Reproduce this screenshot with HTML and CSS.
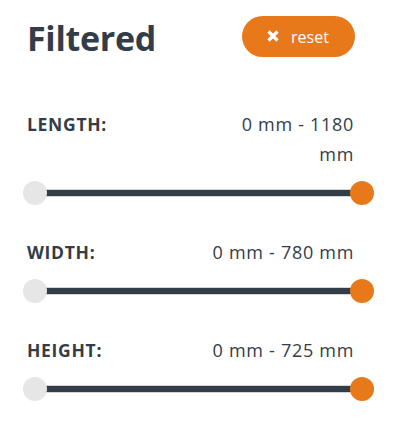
FILE: index.html
```html
<!DOCTYPE html>
<html lang="en">
<head>
<meta charset="utf-8">
<title>Filtered</title>
<link rel="stylesheet" href="styles.css">
</head>
<body>
<div class="panel">
  <div class="head">
    <h2 class="title">Filtered</h2>
    <button class="reset" type="button">
      <svg class="reset-icon" width="12" height="12" viewBox="0 0 12 12" aria-hidden="true">
        <path d="M1.5 1.5 L10.5 10.5 M10.5 1.5 L1.5 10.5" stroke="#fff" stroke-width="3.2" stroke-linecap="butt"/>
      </svg>
      <span>reset</span>
    </button>
  </div>

  <div class="filter">
    <div class="row"><span class="label">LENGTH:</span><span class="value">0 mm - 1180 mm</span></div>
    <div class="slider"><div class="track"></div><span class="thumb lo"></span><span class="thumb hi"></span></div>
  </div>

  <div class="filter">
    <div class="row"><span class="label">WIDTH:</span><span class="value">0 mm - 780 mm</span></div>
    <div class="slider"><div class="track"></div><span class="thumb lo"></span><span class="thumb hi"></span></div>
  </div>

  <div class="filter">
    <div class="row"><span class="label">HEIGHT:</span><span class="value">0 mm - 725 mm</span></div>
    <div class="slider"><div class="track"></div><span class="thumb lo"></span><span class="thumb hi"></span></div>
  </div>
</div>
</body>
</html>
```

FILE: styles.css
```css
html, body {
  margin: 0;
  padding: 0;
  background: #fff;
}
body {
  font-family: "Open Sans", Lato, sans-serif;
  color: #333d47;
}
.panel {
  width: 327px;
  padding: 16px 0 0 27px;
}
.head {
  display: flex;
  align-items: center;
  justify-content: space-between;
  height: 41px;
}
.title {
  margin: 0;
  font-size: 34px;
  font-weight: 700;
  line-height: 41px;
  letter-spacing: -0.3px;
  color: #333d47;
  position: relative;
  top: 2px;
}
.reset {
  display: flex;
  align-items: center;
  gap: 12px;
  width: 113px;
  height: 41px;
  margin-right: -1px;
  padding: 0 0 0 25px;
  border: none;
  border-radius: 21px;
  background: #e8791a;
  color: #fff;
  font-family: "Open Sans", Lato, sans-serif;
  font-size: 16px;
  cursor: pointer;
}
.reset-icon {
  display: block;
  flex: none;
  position: relative;
  top: -1px;
}
.filter {
  margin-top: 52px;
}
.filter + .filter {
  margin-top: 32px;
}
.row {
  display: flex;
  justify-content: space-between;
  align-items: flex-start;
  line-height: 30px;
}
.label {
  font-size: 17.5px;
  font-weight: 700;
  letter-spacing: 0.7px;
  color: #333d47;
}
.value {
  width: 145px;
  text-align: right;
  font-size: 18px;
  letter-spacing: 0.7px;
  color: #333d47;
}
.slider {
  position: relative;
  height: 24px;
  margin: 12px -8px 0 7.5px;
  display: flex;
  align-items: center;
}
.track {
  flex: 1;
  height: 6px;
  background: #333d47;
  border-top: 1px solid #d4d4d4;
  border-bottom: 1px solid #d4d4d4;
}
.thumb {
  position: absolute;
  top: 0;
  width: 24px;
  height: 24px;
  border-radius: 50%;
}
.thumb.lo {
  left: -12px;
  background: #e6e6e6;
}
.thumb.hi {
  right: -12px;
  background: #e8791a;
}
```
